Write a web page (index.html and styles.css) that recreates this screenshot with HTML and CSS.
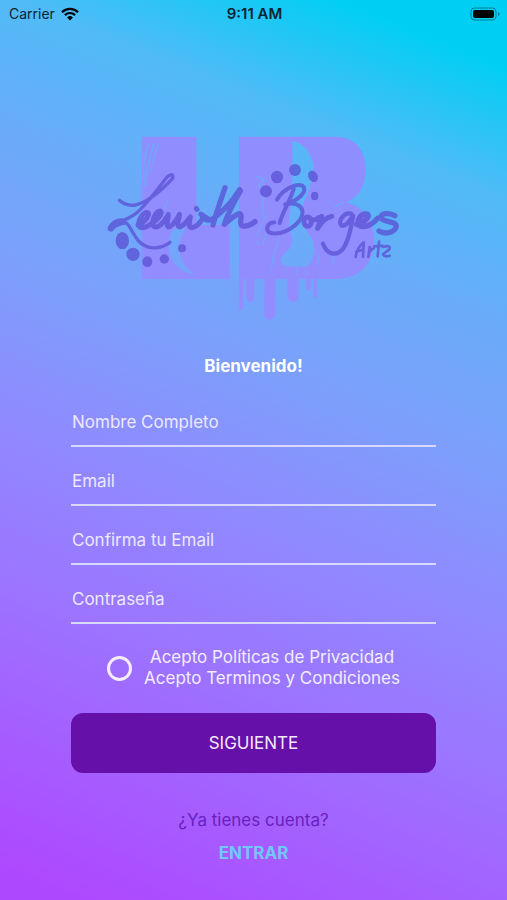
FILE: index.html
```html
<!DOCTYPE html>
<html lang="es">
<head>
<meta charset="utf-8">
<meta name="viewport" content="width=device-width, initial-scale=1">
<title>Leevith Borges Arte</title>
<link rel="stylesheet" href="styles.css">
</head>
<body>
<header class="status">
  <div class="status-left">
    <span>Carrier</span>
    <svg class="wifi" viewBox="0 0 18 14" aria-hidden="true">
      <path d="M1 5.200a11.400 11.400 0 0 1 16 0M3.900 8.100a7.300 7.300 0 0 1 10.200 0" fill="none" stroke="currentColor" stroke-width="2.200"/>
      <path d="M6.100 10.500a4.200 4.200 0 0 1 5.800 0L9 13.500z" fill="currentColor"/>
    </svg>
  </div>
  <time class="status-time">9:11 AM</time>
  <svg class="battery" viewBox="0 0 30 14" aria-hidden="true">
    <rect x="1" y="1" width="25" height="12" rx="3.500" fill="none" stroke="#000" stroke-opacity=".4"/>
    <rect x="3" y="3" width="21" height="8" rx="2" fill="#000"/>
    <path d="M28 5v4q1.600-.5 1.600-2T28 5z" fill="#000" fill-opacity=".4"/>
  </svg>
</header>
<main class="content">
  <svg class="logo" viewBox="21 27 885 567" role="img" aria-label="Leevith Borges Arte">
    <defs>
      <mask id="wear" maskUnits="userSpaceOnUse" x="0" y="0" width="930" height="620">
        <rect width="930" height="620" fill="#fff"/>
        <g fill="#000">
          <path d="M580 48q48 10 62 68 4 40-10 70l-22 60 6 60 26 40q2 30-2 56l-12 20q-40 8-78-2-12-18 6-34 26-20 24-50-12-20-10-60 8-50 10-112z"/>
          <path d="M220 316q22-16 40-4-20 24-20 60 4 46 46 76-46-6-70-46-14-44 4-86z"/>
        </g>
        <g fill="none" stroke="#000" stroke-width="6" stroke-linecap="round" opacity=".6">
          <path d="M148 55q-12 50-14 108M164 56q-20 70-24 120M177 60q-16 44-22 80M137 84v100M208 225l-12 26M475 155l24 10-20 16 18 14M496 200l-8 50 12 36" />
          <path d="M458 290l-4 22M488 296l-12 36M470 345l12 14M500 330l-8 26M540 340l-20 66M528 400l-14 30M640 350l8 40M660 390l-4 30M705 390l-4 26M730 232l-22 14" stroke-width="5"/>
          <path d="M562 428v10M594 428v24M622 432v18" stroke-width="4"/>
        </g>
      </mask>
    </defs>
    <path class="block" mask="url(#wear)" d="M128 35h164v265h100v162H128zM420 35h290c60 0 90 42 90 98 0 50-22 88-60 98 50 12 85 52 85 112 0 76-44 119-115 119h-55v48q-1 10-6 10t-6-10v-48h-8v28q-3 8-7 8t-7-8v-28h-22v54q-6 16-17 16t-17-16v-54h-36v105q-1 17-17 17t-16-17V462h-30v57q-3 12-12 12t-12-12v-57h-10v91h-12z"/>
    <g class="ink">
      <path d="M61 226q20 18 48 14c45-10 87-54 112-80 4-18-12-10-20 0-20 25-51 70-84 100-28 26-65 28-78 50 14-10 26-16 42-16 8 0 18 30 36 52 26 30 66 28 96 6" stroke-width="10"/>
      <path d="M36 310q10-20 32-20" stroke-width="20"/>
      <path d="M117 300c14-4 35-26 31-36-16-8-36 30-26 42 14 8 30-6 40-14 14-6 30-28 22-34-16 0-28 36-20 46 12 8 30-10 44-36 0 16-8 34 0 38 12 0 24-20 34-38-4 18-10 36 0 38 14-4 22-18 32-30-4 20-6 30 4 32 14-2 26-16 34-30" stroke-width="15"/>
      <path d="M292 250l2 3" stroke-width="15"/>
      <path d="M306 268l24 16M378 188c-12 36-24 68-36 112M312 276q14 22 46-8 34-26 64-74M424 198c-20 34-38 70-48 100 14-12 30-28 46-32 12 6-4 24 6 36 14 4 28-2 40-12" stroke-width="16"/>
      <path d="M534 224c12-24 52-52 76-42 20 16-14 46-52 56 40-10 62 12 48 42-22 34-68 54-96 42-12-12-4-28 16-30M584 192c-8 30-34 70-42 102" stroke-width="12"/>
      <ellipse cx="626" cy="290" rx="11" ry="14" stroke-width="15"/>
      <path d="M636 284q12 4 22-6M668 274l-12 36c10-18 24-32 42-36" stroke-width="15"/>
      <path d="M756 266c-22-6-42 26-28 36 16 2 26-18 34-30-6 40-14 80-32 102-22 22-48 12-58-18" stroke-width="13"/>
      <path d="M772 298c20-2 42-22 34-30-20-6-38 22-24 34 20 8 40-6 54-22M888 272c-16-10-44-8-42 6 4 14 44 8 46 26-6 22-38 24-52 14" stroke-width="16"/>
      <g class="dots">
        <ellipse cx="70" cy="347" rx="20" ry="26"/><circle cx="102" cy="388" r="20"/><ellipse cx="145" cy="410" rx="15" ry="16"/><circle cx="196" cy="402" r="14"/><circle cx="249" cy="370" r="12"/>
        <circle cx="501" cy="199" r="18"/><ellipse cx="534" cy="156" rx="18" ry="19"/><circle cx="588" cy="135" r="18"/><ellipse cx="642" cy="154" rx="14" ry="18" transform="rotate(-30 642 154)"/><ellipse cx="647" cy="213" rx="11" ry="13"/>
      </g>
      <path d="M770 396q4-28 24-44l-2 44M772 380l20-6M812 366l-4 30c2-16 8-24 16-26M840 350l-4 44M826 364l24-2M852 366c18-6 24 0 18 8l-18 14c4 8 14 6 20 4" stroke-width="8"/>
    </g>
  </svg>
  <h1 class="title">Bienvenido!</h1>
  <form class="form">
    <input class="field" type="text" placeholder="Nombre Completo" aria-label="Nombre Completo">
    <input class="field" type="email" placeholder="Email" aria-label="Email">
    <input class="field" type="email" placeholder="Confirma tu Email" aria-label="Confirma tu Email">
    <input class="field" type="password" placeholder="Contraseña" aria-label="Contraseña">
    <div class="terms">
      <input class="check" type="checkbox" id="accept">
      <label for="accept">Acepto Políticas de Privacidad<br>Acepto Terminos y Condiciones</label>
    </div>
    <button class="submit" type="button">SIGUIENTE</button>
  </form>
  <p class="question">¿Ya tienes cuenta?</p>
  <a class="login" href="#">ENTRAR</a>
</main>
</body>
</html>
```
FILE: styles.css
```css
* {
  box-sizing: border-box;
}

body {
  margin: 0;
  min-height: 100vh;
  font-family: Inter, "Liberation Sans", sans-serif;
  font-size: 17px;
  line-height: 21px;
  color: #f1edff;
  background: linear-gradient(22deg, #ae48ff 3%, #9b76ff 30%, #8d8dff 46%, #7d9efb 57%, #6babf9 70%, #50bbf7 82%, #00cff3 94%);
}

.status {
  display: grid;
  grid-template-columns: 1fr auto 1fr;
  align-items: center;
  height: 27px;
  padding: 0 7px 0 9px;
  font-size: 14px;
  color: #0b2333;
}

.status-left {
  display: flex;
  align-items: center;
  gap: 6px;
}

.wifi {
  width: 18px;
  height: 14px;
  color: #000;
}

.status-time {
  font-size: 15px;
  font-weight: 600;
}

.battery {
  width: 30px;
  height: 14px;
  justify-self: end;
}

.content {
  display: flex;
  flex-direction: column;
  align-items: center;
  width: 72%;
  margin: 0 auto;
  padding-top: 107px;
}

.logo {
  width: 295px;
  height: 189px;
}

.block {
  fill: #958bff;
  opacity: 0.92;
}

.ink {
  fill: none;
  stroke: #5a50d4;
  stroke-linecap: round;
  stroke-linejoin: round;
  opacity: 0.75;
}

.dots {
  fill: #5a50d4;
  stroke: none;
}

.title {
  margin: 33px 0 19px;
  font-size: 17px;
  line-height: 21px;
  font-weight: 700;
  color: #fff;
}

.form {
  display: flex;
  flex-direction: column;
  width: 100%;
}

.field {
  width: 100%;
  height: 51px;
  margin-bottom: 8px;
  padding: 3px 0 0 1px;
  border: 0;
  border-bottom: 2px solid #d8d8ff;
  border-radius: 0;
  background: none;
  font: inherit;
  color: inherit;
  outline: 0;
}

.field::placeholder {
  color: #ebe8ff;
  opacity: 1;
}

.terms {
  display: flex;
  justify-content: center;
  align-items: center;
  gap: 12px;
  margin: 15px 0 24px;
  text-align: center;
}

.check {
  appearance: none;
  width: 25px;
  height: 25px;
  margin: 0;
  border: 3px solid #f6eeff;
  border-radius: 50%;
}

.submit {
  height: 60px;
  border: 0;
  border-radius: 12px;
  background: #6610aa;
  font: inherit;
  color: #f6e8ff;
}

.question {
  margin: 37px 0 12px;
  color: #6a1fbd;
}

.login {
  font-weight: 700;
  color: #72c8fa;
  text-decoration: none;
}
```
